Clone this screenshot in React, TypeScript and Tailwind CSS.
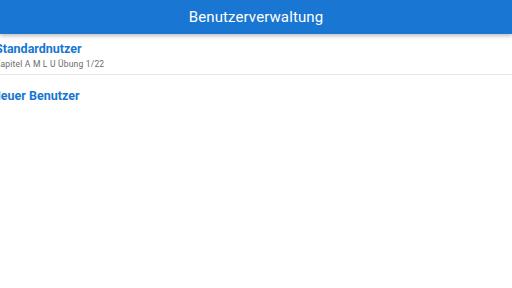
export default function App() {
  const users = [{ name: "Standardnutzer", info: "Kapitel A M L U Übung 1/22" }];

  return (
    <div className="w-[512px] h-[288px] bg-white overflow-hidden" style={{ fontFamily: "Roboto, sans-serif" }}>
      <header className="h-[34px] bg-[#1976d2] flex items-center justify-center shadow-[0_2px_4px_rgba(0,0,0,0.25)] relative z-10">
        <h1 className="text-white text-[15px] font-normal tracking-[0.1px]">Benutzerverwaltung</h1>
      </header>

      <div className="-ml-[5px]">
        {users.map((u) => (
          <div key={u.name} className="pt-[7px] pb-[3px] border-b border-[#e8e8e8]">
            <div className="text-[12.5px] font-bold text-[#1976d2] leading-[16px]">{u.name}</div>
            <div className="text-[8.5px] text-[#6b6b6b] leading-[14px] tracking-[0.2px]">{u.info}</div>
          </div>
        ))}
        <div className="pt-[13px] -ml-[3px]">
          <div className="text-[12.5px] font-bold text-[#1976d2] leading-[16px]">Neuer Benutzer</div>
        </div>
      </div>
    </div>
  );
}
